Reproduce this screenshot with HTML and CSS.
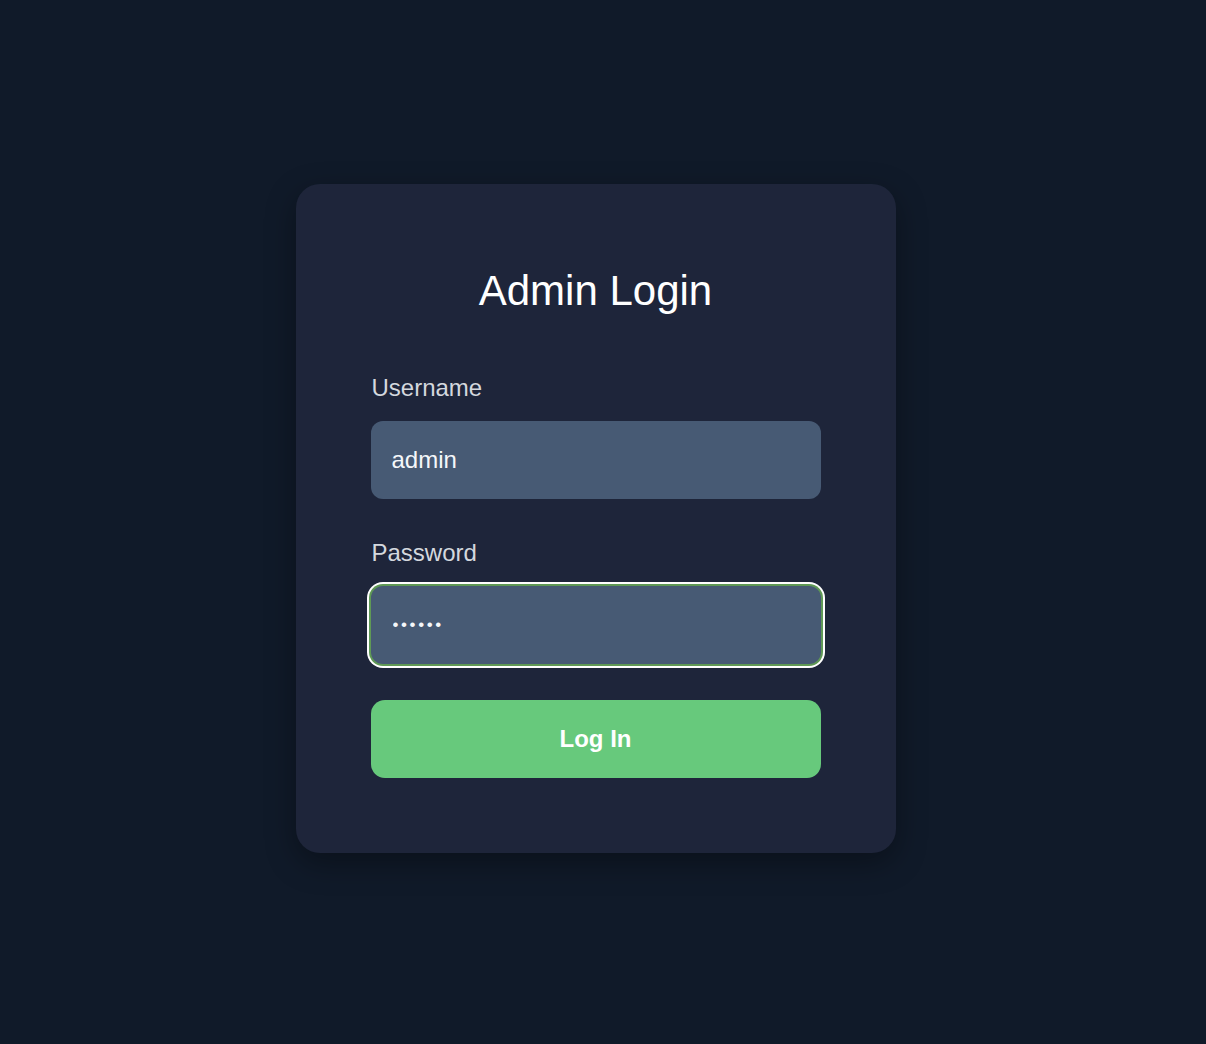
FILE: index.html
```html
<!DOCTYPE html>
<html lang="en">
<head>
<meta charset="utf-8">
<title>Admin Login</title>
<link rel="stylesheet" href="styles.css">
</head>
<body>
<main class="page">
  <form class="card" onsubmit="return false;">
    <h1 class="title">Admin Login</h1>
    <div class="field">
      <label class="label" for="username">Username</label>
      <input class="input" id="username" type="text" value="admin">
    </div>
    <div class="field">
      <label class="label" for="password">Password</label>
      <input class="input input-password input-focus" id="password" type="password" value="secret">
    </div>
    <button class="button" type="submit">Log In</button>
  </form>
</main>
</body>
</html>
```
FILE: styles.css
```css
html, body {
  margin: 0;
  padding: 0;
  background: #101a29;
  font-family: "Liberation Sans", Arial, Helvetica, sans-serif;
}

.page {
  min-height: 1044px;
  box-sizing: border-box;
  display: flex;
  justify-content: center;
  align-items: flex-start;
  padding: 184px 15px 0 0;
}

.card {
  width: 600px;
  box-sizing: border-box;
  padding: 83px 75px 75px;
  background: #1e253a;
  border-radius: 24px;
  box-shadow: 0 10px 30px rgba(0, 0, 0, 0.35);
  display: flex;
  flex-direction: column;
}

.title {
  margin: 0 0 59px;
  font-size: 42px;
  line-height: 48px;
  font-weight: 400;
  color: #ffffff;
  text-align: center;
}

.field {
  display: flex;
  flex-direction: column;
  gap: 19px;
  margin-bottom: 40px;
}

.field + .field {
  margin-bottom: 36px;
}

.label {
  font-size: 24px;
  line-height: 28px;
  color: #d4d8de;
  padding-left: 1px;
}

.input {
  height: 78px;
  box-sizing: border-box;
  padding: 0 21px;
  border: none;
  border-radius: 12px;
  background: #475a74;
  color: #f5f7fa;
  font-family: "Liberation Sans", Arial, Helvetica, sans-serif;
  font-size: 24px;
  outline: none;
}

.input-password {
  font-size: 17px;
  letter-spacing: 2.6px;
  padding-left: 22px;
}

.input-focus {
  box-shadow: 0 0 0 2px #5f9955, 0 0 0 4px #ffffff;
}

.button {
  height: 78px;
  border: none;
  border-radius: 14px;
  background: #67c97c;
  color: #ffffff;
  font-family: "Liberation Sans", Arial, Helvetica, sans-serif;
  font-size: 24px;
  font-weight: 700;
  cursor: pointer;
}
```
